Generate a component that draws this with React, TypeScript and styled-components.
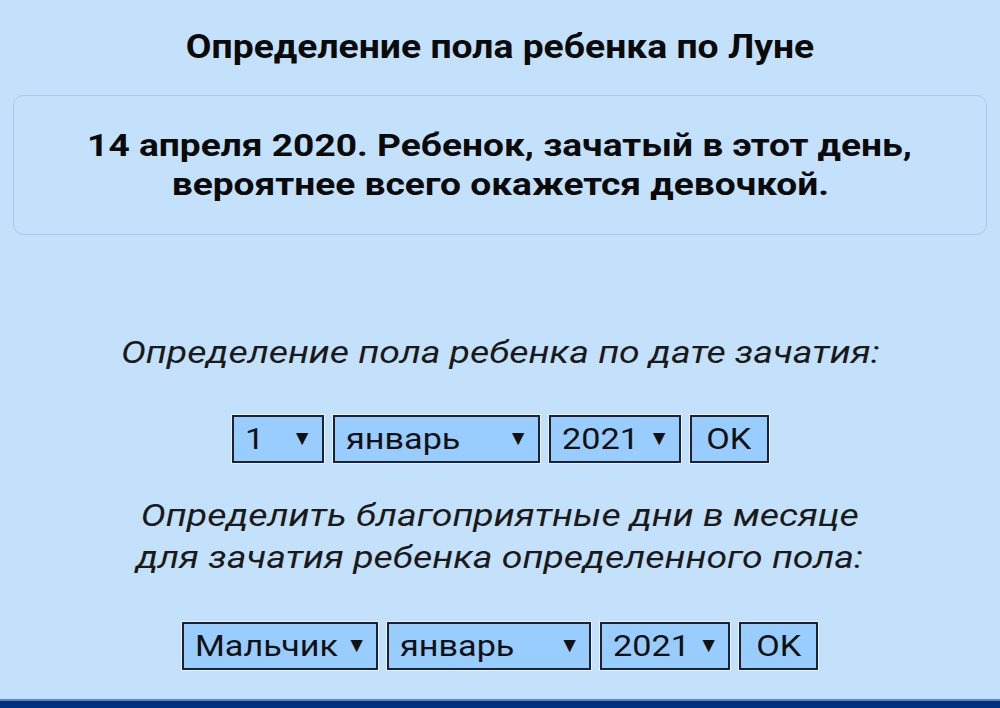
import React from "react";
import styled, { createGlobalStyle } from "styled-components";

const Global = createGlobalStyle`
  html, body { margin: 0; padding: 0; background: #c4e1fc; }
  body { font-family: Roboto, "Noto Sans", Arial, sans-serif; color: #111; }
  #root { width: 1000px; height: 708px; overflow: hidden; }
`;

const Page = styled.div`
  width: 1000px;
  height: 708px;
  display: flex;
  flex-direction: column;
  align-items: center;
  background: #c4e1fc;
`;

/* The reference glyphs are drawn wider than Roboto's natural proportions */
const Wide = styled.span<{ $x: number; $origin?: string }>`
  display: inline-block;
  white-space: nowrap;
  transform: scaleX(${(p) => p.$x});
  transform-origin: ${(p) => p.$origin ?? "center"};
`;

const Title = styled.h1`
  margin: 28px 0 0;
  font-size: 33px;
  line-height: 38px;
  font-weight: 700;
  color: #0a0a0a;
  text-align: center;
`;

const ResultBox = styled.div`
  box-sizing: border-box;
  width: 974px;
  height: 140px;
  margin-top: 29px;
  border: 1.5px solid #a6cbef;
  border-radius: 10px;
  display: flex;
  flex-direction: column;
  align-items: center;
  justify-content: center;
  text-align: center;
  font-size: 32px;
  line-height: 39px;
  font-weight: 700;
  color: #0a0a0a;
  padding-bottom: 0;
`;

const Caption = styled.p<{ $top: number }>`
  margin: ${(p) => p.$top}px 0 0;
  display: flex;
  flex-direction: column;
  align-items: center;
  font-size: 32px;
  line-height: 42px;
  font-style: italic;
  color: #1a1a1a;
  text-align: center;
`;

const Row = styled.div<{ $top: number }>`
  display: flex;
  gap: 9px;
  margin-top: ${(p) => p.$top}px;
`;

const Control = styled.div<{ $w: number }>`
  position: relative;
  box-sizing: border-box;
  width: ${(p) => p.$w}px;
  height: 48px;
  background: #99ccff;
  border: 2px solid #1d2230;
  outline: 1px solid #e6f2ff;
  display: flex;
  align-items: center;
  justify-content: space-between;
  padding: 0 9px 2px 11px;
  font-size: 30px;
  color: #111;
`;

const Arrow = styled.span`
  font-size: 21px;
  line-height: 1;
  color: #111;
`;

const Hidden = styled.select`
  position: absolute;
  inset: 0;
  opacity: 0;
  cursor: pointer;
`;

const OkButton = styled.button<{ $w: number }>`
  box-sizing: border-box;
  width: ${(p) => p.$w}px;
  height: 48px;
  background: #99ccff;
  border: 2px solid #1d2230;
  outline: 1px solid #e6f2ff;
  font-family: inherit;
  font-size: 30px;
  color: #111;
  padding: 0 0 2px;
  cursor: pointer;
`;

const Spacer = styled.div`
  flex: 1;
`;

const BottomBar = styled.div`
  width: 100%;
  height: 7px;
  background: #002f80;
  border-top: 2px solid #5a86bf;
`;

function Select({ w, value, options }: { w: number; value: string; options: string[] }) {
  return (
    <Control $w={w}>
      <Wide $x={1.14} $origin="left">{value}</Wide>
      <Arrow>▼</Arrow>
      <Hidden defaultValue={value}>
        {options.map((o) => (
          <option key={o}>{o}</option>
        ))}
      </Hidden>
    </Control>
  );
}

const months = ["январь", "февраль", "март", "апрель", "май", "июнь", "июль", "август", "сентябрь", "октябрь", "ноябрь", "декабрь"];
const days = Array.from({ length: 31 }, (_, i) => String(i + 1));
const years = ["2020", "2021", "2022"];

export default function App() {
  return (
    <>
      <Global />
      <Page>
        <Title>
          <Wide $x={1.13}>Определение пола ребенка по Луне</Wide>
        </Title>
        <ResultBox>
          <Wide $x={1.16}>14 апреля 2020. Ребенок, зачатый в этот день,</Wide>
          <Wide $x={1.16}>вероятнее всего окажется девочкой.</Wide>
        </ResultBox>
        <Caption $top={96}>
          <Wide $x={1.17}>Определение пола ребенка по дате зачатия:</Wide>
        </Caption>
        <Row $top={42}>
          <Select w={92} value="1" options={days} />
          <Select w={207} value="январь" options={months} />
          <Select w={132} value="2021" options={years} />
          <OkButton $w={79}>
            <Wide $x={1.14}>OK</Wide>
          </OkButton>
        </Row>
        <Caption $top={31}>
          <Wide $x={1.17}>Определить благоприятные дни в месяце</Wide>
          <Wide $x={1.17}>для зачатия ребенка определенного пола:</Wide>
        </Caption>
        <Row $top={44}>
          <Select w={196} value="Мальчик" options={["Мальчик", "Девочка"]} />
          <Select w={204} value="январь" options={months} />
          <Select w={130} value="2021" options={years} />
          <OkButton $w={79}>
            <Wide $x={1.14}>OK</Wide>
          </OkButton>
        </Row>
        <Spacer />
        <BottomBar />
      </Page>
    </>
  );
}
